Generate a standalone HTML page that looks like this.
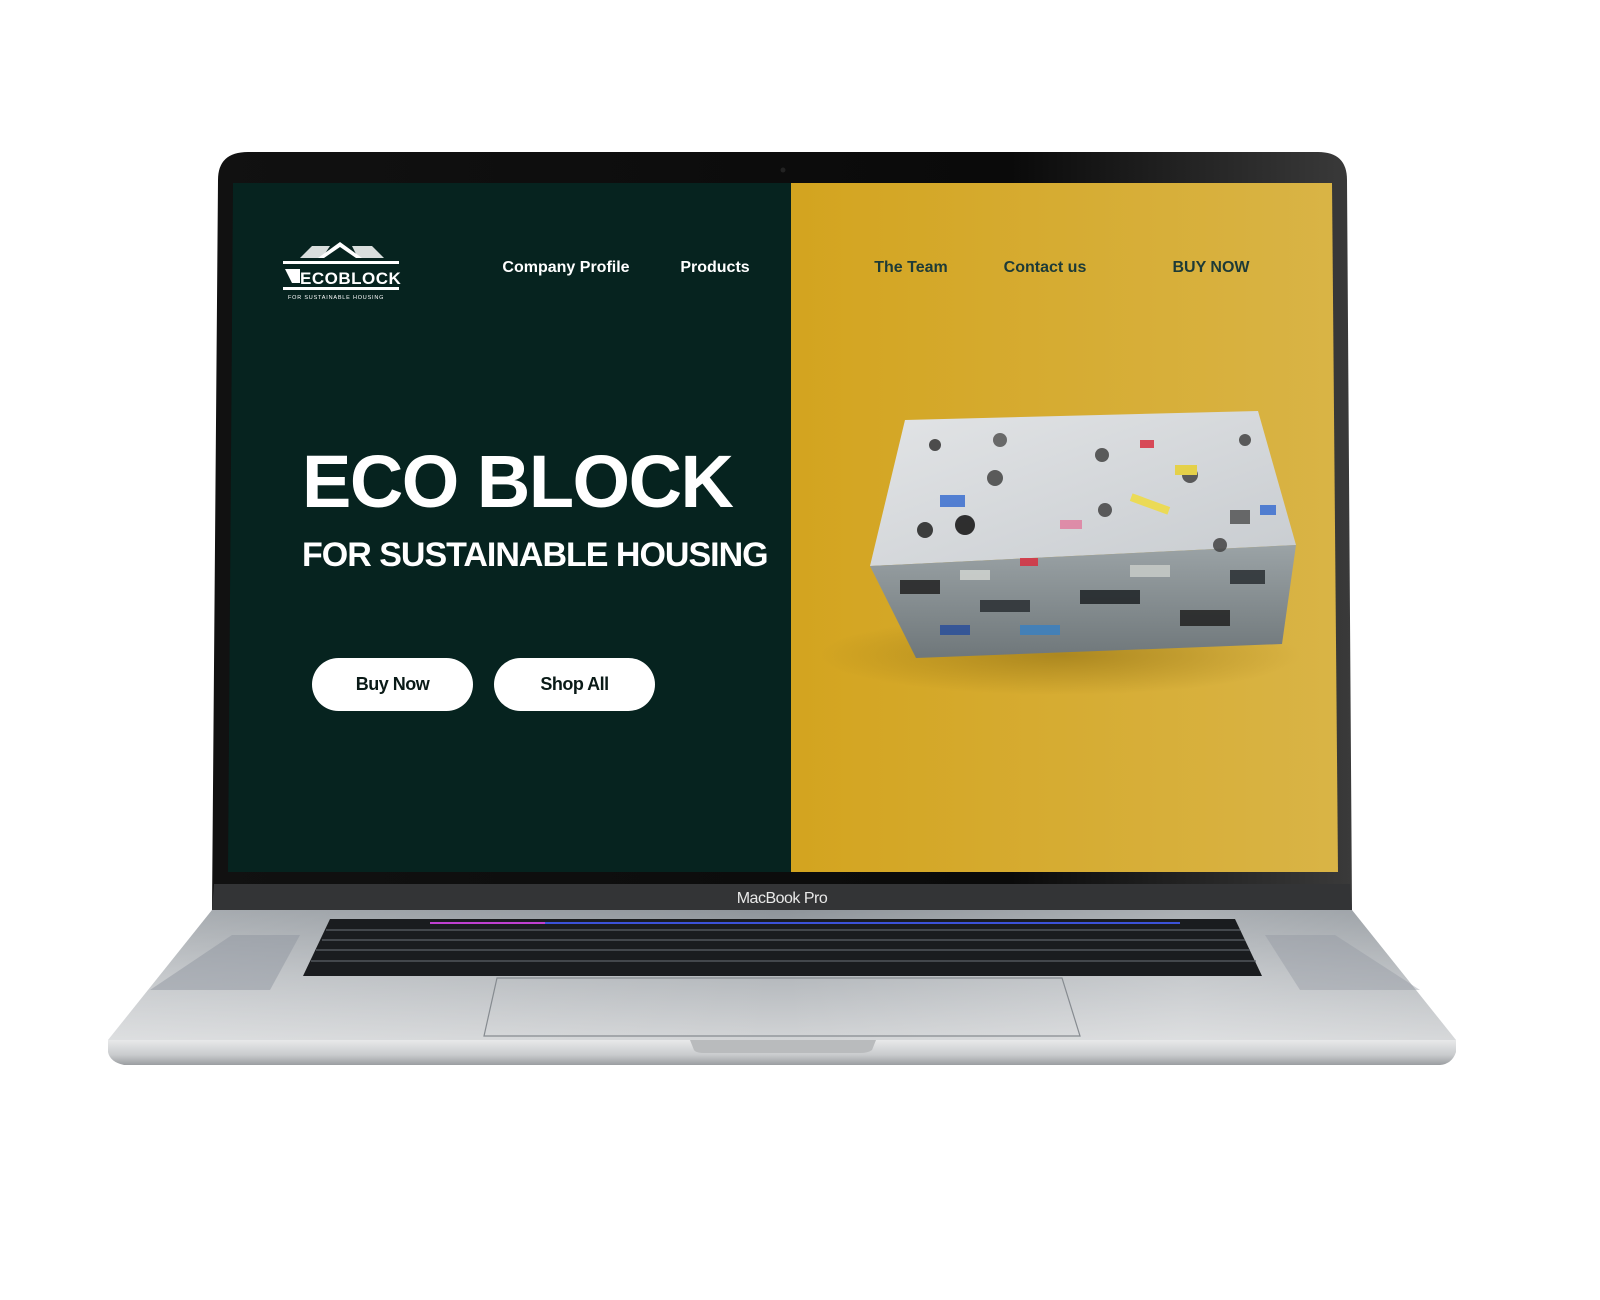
<!DOCTYPE html>
<html><head><meta charset="utf-8">
<style>
html,body{margin:0;padding:0;background:#fff;}
body{width:1600px;height:1300px;position:relative;overflow:hidden;font-family:"Liberation Sans",sans-serif;}
.abs{position:absolute;}
.nav{position:absolute;top:259px;font-size:16px;font-weight:bold;white-space:nowrap;transform:translateX(-50%);}
.btn{position:absolute;top:658px;width:161px;height:53px;border-radius:27px;background:#fff;color:#0a1a17;font-weight:bold;font-size:18px;text-align:center;line-height:53px;letter-spacing:-0.5px;}
</style></head><body>

<svg class="abs" style="left:0;top:0" width="1600" height="1300" viewBox="0 0 1600 1300">
<defs>
<linearGradient id="base" x1="0" y1="0" x2="0" y2="1">
<stop offset="0" stop-color="#8e949a"/><stop offset="0.5" stop-color="#b4b8bc"/><stop offset="1" stop-color="#d2d4d6"/>
</linearGradient>
<linearGradient id="baseH" x1="0" y1="0" x2="1" y2="0">
<stop offset="0" stop-color="#fff" stop-opacity="0.25"/><stop offset="0.5" stop-color="#fff" stop-opacity="0"/><stop offset="0.8" stop-color="#fff" stop-opacity="0.25"/><stop offset="1" stop-color="#fff" stop-opacity="0.1"/>
</linearGradient>
<linearGradient id="edge" x1="0" y1="0" x2="0" y2="1">
<stop offset="0" stop-color="#e8e9ea"/><stop offset="0.6" stop-color="#c9cbcd"/><stop offset="1" stop-color="#9b9ea1"/>
</linearGradient>
<linearGradient id="yel" x1="0" y1="0" x2="1" y2="0">
<stop offset="0" stop-color="#d3a41f"/><stop offset="1" stop-color="#d9b446"/>
</linearGradient>
<linearGradient id="lid" x1="0" y1="0" x2="1" y2="0">
<stop offset="0" stop-color="#111"/><stop offset="0.7" stop-color="#0a0a0a"/><stop offset="1" stop-color="#3a3a3a"/>
</linearGradient>
<radialGradient id="shadow" cx="0.5" cy="0.5" r="0.5">
<stop offset="0" stop-color="#8a6a10" stop-opacity="0.55"/><stop offset="1" stop-color="#8a6a10" stop-opacity="0"/>
</radialGradient>
<linearGradient id="topf" x1="0" y1="0" x2="1" y2="1">
<stop offset="0" stop-color="#e2e4e6"/><stop offset="1" stop-color="#c8ccd0"/>
</linearGradient>
<linearGradient id="frontf" x1="0" y1="0" x2="0" y2="1">
<stop offset="0" stop-color="#9ba3a6"/><stop offset="1" stop-color="#6f777a"/>
</linearGradient>
</defs>

<!-- base -->
<path d="M212 910 L1352 910 L1456 1040 L108 1040 Z" fill="url(#base)"/>
<path d="M212 910 L1352 910 L1456 1040 L108 1040 Z" fill="url(#baseH)"/>
<path d="M108 1040 L1456 1040 L1456 1052 Q1452 1064 1440 1065 L124 1065 Q110 1062 108 1052 Z" fill="url(#edge)"/>
<path d="M690 1040 L876 1040 L872 1050 Q868 1053 860 1053 L705 1053 Q696 1053 694 1050 Z" fill="#b9bbbd"/>
<path d="M232 935 L300 935 L270 990 L150 990 Z" fill="#9096a0" opacity="0.5"/>
<path d="M1265 935 L1335 935 L1420 990 L1300 990 Z" fill="#9096a0" opacity="0.4"/>
<!-- keyboard -->
<path d="M330 919 L1235 919 L1262 976 L303 976 Z" fill="#1a1c1f"/>
<g stroke="#5c6168" stroke-width="1.2">
<line x1="326" y1="930" x2="1240" y2="930"/>
<line x1="322" y1="940" x2="1245" y2="940"/>
<line x1="316" y1="950" x2="1250" y2="950"/>
<line x1="311" y1="961" x2="1256" y2="961"/>
</g>
<line x1="430" y1="923" x2="1180" y2="923" stroke="#3c52d8" stroke-width="2"/>
<line x1="430" y1="923" x2="545" y2="923" stroke="#c040d0" stroke-width="2"/>
<path d="M497 978 L1062 978 L1080 1036 L484 1036 Z" fill="none" stroke="#868b90" stroke-width="1.2"/>
<!-- lid -->
<path d="M212 910 L218 180 Q218 152 248 152 L1318 152 Q1347 152 1347 180 L1352 910 Z" fill="url(#lid)"/>
<path d="M214 884 L1350 884 L1352 910 L212 910 Z" fill="#333436"/>
<circle cx="783" cy="170" r="2.5" fill="#222"/>
<!-- screen -->
<path d="M233 183 L791 183 L791 872 L228 872 Z" fill="#06231f"/>
<path d="M791 183 L1332 183 L1338 872 L791 872 Z" fill="url(#yel)"/>
<ellipse cx="1060" cy="655" rx="240" ry="40" fill="url(#shadow)"/>
<path d="M905 420 L1258 411 L1296 545 L870 566 Z" fill="url(#topf)"/>
<path d="M870 566 L1296 545 L1282 644 L916 658 Z" fill="url(#frontf)"/>
<g opacity="0.85">
<circle cx="935" cy="445" r="6" fill="#333"/><circle cx="995" cy="478" r="8" fill="#444"/>
<circle cx="1000" cy="440" r="7" fill="#555"/><circle cx="1102" cy="455" r="7" fill="#444"/>
<circle cx="1190" cy="475" r="8" fill="#444"/><circle cx="1245" cy="440" r="6" fill="#444"/>
<circle cx="1105" cy="510" r="7" fill="#444"/><circle cx="925" cy="530" r="8" fill="#222"/>
<circle cx="1220" cy="545" r="7" fill="#444"/><circle cx="965" cy="525" r="10" fill="#111"/>
<rect x="940" y="495" width="25" height="12" fill="#3b6fd0"/>
<rect x="1175" y="465" width="22" height="10" fill="#e8d030"/>
<rect x="1130" y="500" width="40" height="8" fill="#f0dc40" transform="rotate(20 1150 504)"/>
<rect x="1020" y="558" width="18" height="8" fill="#d83040"/>
<rect x="1140" y="440" width="14" height="8" fill="#d83040"/>
<rect x="1060" y="520" width="22" height="9" fill="#e080a0"/>
<rect x="1230" y="510" width="20" height="14" fill="#555"/>
<rect x="1260" y="505" width="16" height="10" fill="#3b6fd0"/>
<rect x="900" y="580" width="40" height="14" fill="#222"/>
<rect x="980" y="600" width="50" height="12" fill="#2a2f33"/>
<rect x="1080" y="590" width="60" height="14" fill="#1e2326"/>
<rect x="1180" y="610" width="50" height="16" fill="#222"/>
<rect x="1020" y="625" width="40" height="10" fill="#3b80c0"/>
<rect x="940" y="625" width="30" height="10" fill="#2a4f9a"/>
<rect x="1130" y="565" width="40" height="12" fill="#c8ccc8"/>
<rect x="1230" y="570" width="35" height="14" fill="#2a2f33"/>
<rect x="960" y="570" width="30" height="10" fill="#d0d4d0"/>
</g>
<!-- logo -->
<g fill="#fff">
<path d="M318 258 L340 242 L362 258 L356 258 L340 247 L324 258 Z"/>
<path d="M300 258 L312 246 L330 246 L322 258 Z" opacity="0.85"/>
<path d="M358 258 L352 246 L372 246 L384 258 Z" opacity="0.85"/>
<rect x="283" y="261" width="116" height="3"/>
<rect x="283" y="287" width="116" height="3"/>
<path d="M285 269 L300 269 L300 283 L292 283 Z"/>
<text x="300" y="284" font-family="Liberation Sans" font-weight="bold" font-size="17" letter-spacing="0.5">ECOBLOCK</text>
<text x="288" y="299" font-family="Liberation Sans" font-size="5.5" letter-spacing="0.8">FOR SUSTAINABLE HOUSING</text>
</g>
<text x="782" y="903" font-family="Liberation Sans" font-size="16" fill="#e8e8e8" text-anchor="middle" letter-spacing="-0.5">MacBook Pro</text>
</svg>

<div class="nav" style="left:566px;color:#fff">Company Profile</div>
<div class="nav" style="left:715px;color:#fff">Products</div>
<div class="nav" style="left:911px;color:#1d3a37">The Team</div>
<div class="nav" style="left:1045px;color:#1d3a37">Contact us</div>
<div class="nav" style="left:1211px;color:#1d3a37">BUY NOW</div>

<div class="abs" style="left:302px;top:440px;font-size:74px;font-weight:bold;color:#fff;letter-spacing:-1.5px;white-space:nowrap;line-height:84px;">ECO BLOCK</div>
<div class="abs" style="left:302px;top:535px;font-size:34px;font-weight:bold;color:#fff;letter-spacing:-1px;white-space:nowrap;line-height:40px;">FOR SUSTAINABLE HOUSING</div>

<div class="btn" style="left:312px">Buy Now</div>
<div class="btn" style="left:494px">Shop All</div>
</body></html>
